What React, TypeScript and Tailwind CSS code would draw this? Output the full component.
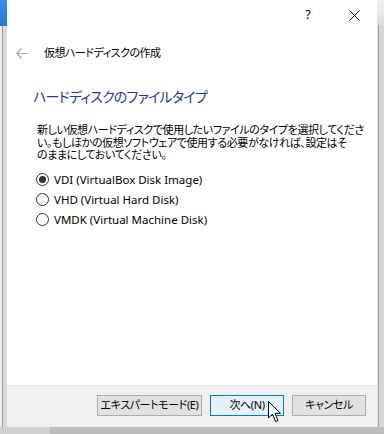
import React from "react";

const jp = "font-['Noto_Sans','Noto_Sans_CJK_JP',sans-serif] [font-feature-settings:'palt']";

function Radio({ label, checked }: { label: string; checked?: boolean }) {
	return (
		<div className="flex items-center h-[20px]">
			<span className="w-[13px] h-[13px] rounded-full border border-[#333333] bg-white flex items-center justify-center">
				{checked && <span className="w-[7px] h-[7px] rounded-full bg-[#333333]"></span>}
			</span>
			<span className="ml-[5px] text-[11.5px] leading-[20px] text-black whitespace-nowrap">{label}</span>
		</div>
	);
}

function Button({ label, width, focused }: { label: string; width: string; focused?: boolean }) {
	return (
		<button
			className={
				(focused ? "border-[#0078d7] bg-[#e5f1fb] " : "border-[#adadad] bg-[#e1e1e1] ") +
				width +
				" h-[21px] border text-[11px] tracking-[-0.4px] text-black whitespace-nowrap flex items-center justify-center overflow-hidden"
			}
		>
			{label}
		</button>
	);
}

export default function App() {
	return (
		<div className={`relative w-[384px] h-[434px] overflow-hidden bg-[#c6c6c6] flex flex-col ${jp}`}>
			<div className="flex h-[427px]">
				{/* window behind, left */}
				<div className="w-[7px] flex flex-col">
					<div className="h-[26px] bg-gradient-to-b from-[#3b8fe3] to-[#2a78d2]"></div>
					<div className="flex-1 flex">
						<div className="w-[2px] bg-[#ededed]"></div>
						<div className="w-[1px] bg-[#9a9a9a]"></div>
						<div className="flex-1 bg-[#dadada]"></div>
					</div>
				</div>

				{/* dialog */}
				<div className="w-[370px] bg-white flex flex-col">
					<div className="h-[30px] flex justify-end">
						<div className="w-[46px] flex items-center justify-center text-[12px] text-black">?</div>
						<div className="w-[46px] flex items-center justify-center">
							<svg width="11" height="11" viewBox="0 0 11 11">
								<path d="M0.5 0.5 L10.5 10.5 M10.5 0.5 L0.5 10.5" stroke="#111" strokeWidth="1" />
							</svg>
						</div>
					</div>

					<div className="mt-[11px] h-[24px] flex items-center">
						<svg className="ml-[9px]" width="12" height="11" viewBox="0 0 12 11">
							<path d="M5.5 0.5 L0.8 5.5 L5.5 10.5 M0.8 5.5 L12 5.5" stroke="#a8a8a8" strokeWidth="1.2" fill="none" />
						</svg>
						<span className="ml-[16px] text-[11px] tracking-[-0.5px] text-black">仮想ハードディスクの作成</span>
					</div>

					<div className="mt-[22px] h-[20px] pl-[26px] text-[14px] tracking-[-0.8px] leading-[20px] text-[#1d3c96]">
						ハードディスクのファイルタイプ
					</div>

					<div className="mt-[17px] pl-[30px] text-[11px] tracking-[-0.4px] leading-[12.6px] text-black whitespace-nowrap">
						<div>新しい仮想ハードディスクで使用したいファイルのタイプを選択してくださ</div>
						<div>い。もしほかの仮想ソフトウェアで使用する必要がなければ、設定はそ</div>
						<div>のままにしておいてください。</div>
					</div>

					<div className="mt-[8px] pl-[29px] flex flex-col">
						<Radio label="VDI (VirtualBox Disk Image)" checked />
						<Radio label="VHD (Virtual Hard Disk)" />
						<Radio label="VMDK (Virtual Machine Disk)" />
					</div>

					<div className="flex-1"></div>

					<div className="h-[42px] bg-[#f0f0f0] border-t border-[#dfdfdf] flex justify-end items-start pt-[9px] pr-[11px] gap-[8px]">
						<Button label="エキスパートモード(E)" width="w-[105px]" />
						<Button label="次へ(N)" width="w-[74px]" focused />
						<Button label="キャンセル" width="w-[74px]" />
					</div>
				</div>

				{/* window behind, right */}
				<div className="w-[7px] flex flex-col">
					<div className="h-[25px] bg-gradient-to-b from-[#f2f2f2] to-[#dcdcdc]"></div>
					<div className="flex-1 flex">
						<div className="w-[1px] bg-[#e6e6e6]"></div>
						<div className="w-[1px] bg-[#9c9c9c]"></div>
						<div className="flex-1 bg-[#d6d6d6]"></div>
					</div>
				</div>
			</div>
			<div className="flex-1 flex">
				<div className="w-[50px] bg-[#d0d0d0]"></div>
				<div className="flex-1 bg-[#bcbcbc]"></div>
			</div>

			{/* mouse pointer */}
			<svg className="absolute left-[268px] top-[401px]" width="14" height="22" viewBox="0 0 14 22">
				<path d="M0.5 0.5 L0.5 17 L4.5 13 L7.5 20.5 L10 19.5 L7 12.3 L12.5 12.3 Z" fill="#fff" stroke="#000" strokeWidth="1" />
			</svg>
		</div>
	);
}
